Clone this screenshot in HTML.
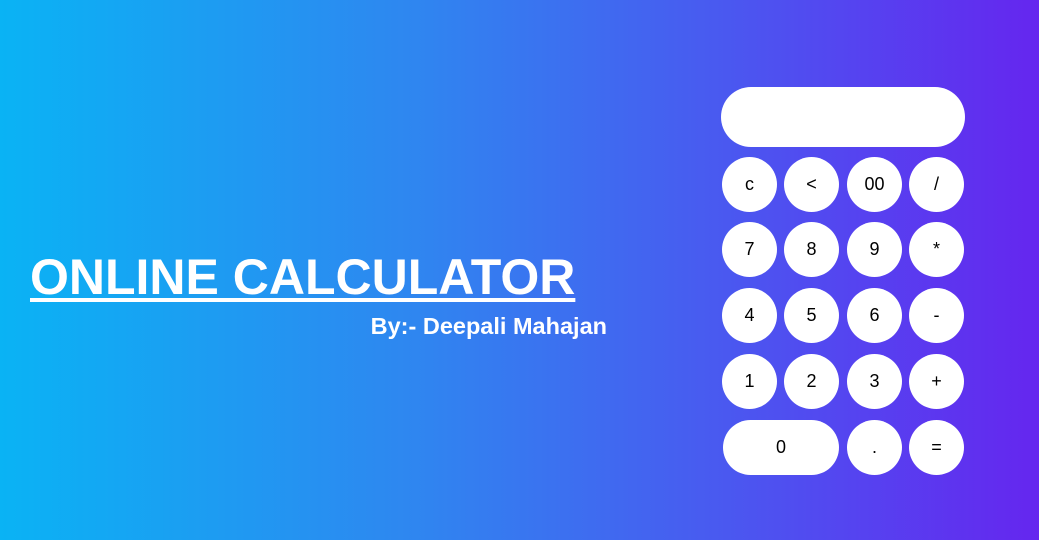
<!DOCTYPE html>
<html><head><style>
html,body{margin:0;padding:0;width:1039px;height:540px;overflow:hidden}
body{background:linear-gradient(to right,#0ab3f4,#2f86f0 40%,#4a58f0 70%,#6526ef);font-family:"Liberation Sans",Arial,sans-serif;position:relative}
h1{position:absolute;left:30px;top:247px;margin:0;font-size:50px;font-weight:bold;color:#fff;text-decoration:underline;text-decoration-thickness:4px;text-underline-offset:4px;line-height:60px;white-space:nowrap}
.by{position:absolute;right:432px;top:313px;font-size:23.5px;font-weight:bold;color:#fff;white-space:nowrap}
.disp{position:absolute;left:721px;top:87px;width:244px;height:60px;border-radius:30px;background:#fff}
.b{position:absolute;width:55px;height:55px;border-radius:28px;background:#fff;color:#000;font-size:18px;display:flex;align-items:center;justify-content:center}
</style></head><body>
<h1>ONLINE CALCULATOR</h1>
<div class="by">By:- Deepali Mahajan</div>
<div class="disp"></div>
<div class="b" style="left:722px;top:157px">c</div>
<div class="b" style="left:784px;top:157px">&lt;</div>
<div class="b" style="left:847px;top:157px">00</div>
<div class="b" style="left:909px;top:157px">/</div>
<div class="b" style="left:722px;top:222px">7</div>
<div class="b" style="left:784px;top:222px">8</div>
<div class="b" style="left:847px;top:222px">9</div>
<div class="b" style="left:909px;top:222px">*</div>
<div class="b" style="left:722px;top:288px">4</div>
<div class="b" style="left:784px;top:288px">5</div>
<div class="b" style="left:847px;top:288px">6</div>
<div class="b" style="left:909px;top:288px">-</div>
<div class="b" style="left:722px;top:354px">1</div>
<div class="b" style="left:784px;top:354px">2</div>
<div class="b" style="left:847px;top:354px">3</div>
<div class="b" style="left:909px;top:354px">+</div>
<div class="b" style="left:723px;top:420px;width:116px">0</div>
<div class="b" style="left:847px;top:420px">.</div>
<div class="b" style="left:909px;top:420px">=</div>
</body></html>
